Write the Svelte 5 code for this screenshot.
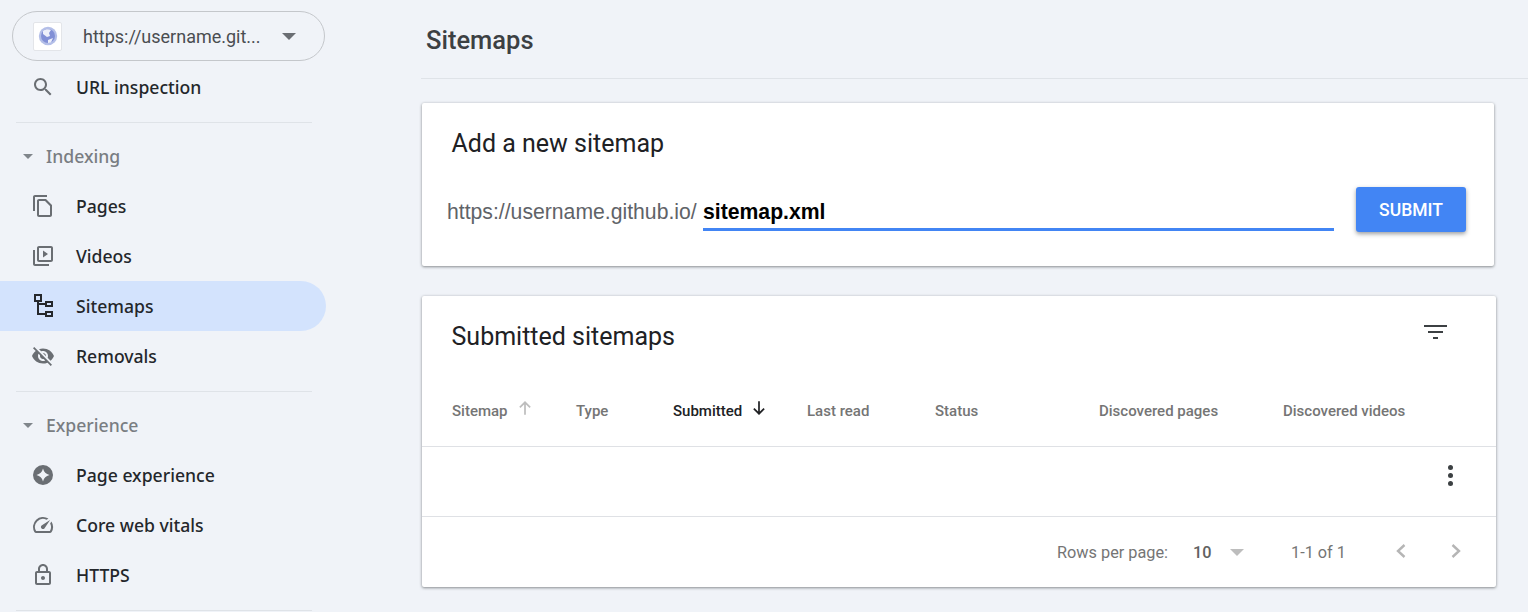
<script>
  const icons = {
    pages: 'M16 1H4c-1.1 0-2 .9-2 2v14h2V3h12V1zm-1 4H8c-1.1 0-1.99.9-1.99 2L6 21c0 1.1.89 2 1.99 2H19c1.1 0 2-.9 2-2V11l-6-6zM8 21V7h6l5 5v9H8z',
    videos: 'M4 6H2v14c0 1.1.9 2 2 2h14v-2H4V6zm16-4H8c-1.1 0-2 .9-2 2v12c0 1.1.9 2 2 2h12c1.100 0 2-.9 2-2V4c0-1.100-.9-2-2-2zm0 14H8V4h12v12zM12 6.500v7l5-3.500z',
    sitemaps: 'M3 0h8v8H3zM5 2v4h4V2zM6 8h2v1h6v2H8v8h6v2H6zM14 7h8v6h-8zM16 9v2h4V9zM14 17h8v6h-8zM16 19v2h4v-2z',
    removals: 'M12 7c2.76 0 5 2.24 5 5 0 .65-.13 1.26-.36 1.83l2.92 2.92c1.51-1.26 2.7-2.89 3.43-4.75-1.73-4.39-6-7.5-11-7.5-1.4 0-2.74.25-3.98.7l2.16 2.16C10.74 7.13 11.35 7 12 7zM2 4.27l2.28 2.28.46.46C3.08 8.3 1.78 10.02 1 12c1.73 4.39 6 7.5 11 7.5 1.55 0 3.03-.3 4.38-.84l.42.42L19.73 22 21 20.73 3.27 3 2 4.27zM7.53 9.8l1.55 1.55c-.05.21-.08.43-.08.65 0 1.66 1.34 3 3 3 .22 0 .44-.03.65-.08l1.55 1.55c-.67.33-1.41.53-2.2.53-2.76 0-5-2.24-5-5 0-.79.2-1.53.53-2.2zm4.31-.78l3.15 3.15.02-.16c0-1.66-1.34-3-3-3l-.17.01z',
    experience: 'M12 2a10 10 0 1 0 0 20 10 10 0 0 0 0-20zM12 5.500c1 3.600 2.900 5.500 6.500 6.500-3.600 1-5.500 2.900-6.500 6.500-1-3.600-2.900-5.500-6.500-6.500 3.600-1 5.500-2.900 6.500-6.500z',
    vitals: 'M20.38 8.57l-1.23 1.85a8 8 0 0 1-.22 7.58H5.07A8 8 0 0 1 15.58 6.85l1.85-1.23A10 10 0 0 0 3.35 19a2 2 0 0 0 1.72 1h13.85a2 2 0 0 0 1.74-1 10 10 0 0 0-.27-10.44zm-9.79 6.84a2 2 0 0 0 2.83 0l5.66-8.49-8.49 5.66a2 2 0 0 0 0 2.83z',
    https: 'M18 8h-1V6c0-2.76-2.24-5-5-5S7 3.24 7 6v2H6c-1.1 0-2 .9-2 2v10c0 1.1.9 2 2 2h12c1.1 0 2-.9 2-2V10c0-1.1-.9-2-2-2zM9 6c0-1.66 1.34-3 3-3s3 1.34 3 3v2H9V6zm9 14H6V10h12v10zm-6-3c1.1 0 2-.9 2-2s-.9-2-2-2-2 .9-2 2 .9 2 2 2z'
  };
  const indexing = [
    { label: 'Pages', icon: 'pages' },
    { label: 'Videos', icon: 'videos' },
    { label: 'Sitemaps', icon: 'sitemaps', active: true },
    { label: 'Removals', icon: 'removals' }
  ];
  const experience = [
    { label: 'Page experience', icon: 'experience' },
    { label: 'Core web vitals', icon: 'vitals' },
    { label: 'HTTPS', icon: 'https' }
  ];
  const columns = ['Type', 'Last read', 'Status', 'Discovered pages', 'Discovered videos'];
</script>

{#snippet navItem(item)}
  <div class="nav-item" class:active={item.active}>
    <svg class="nav-icon" viewBox="0 0 24 24" fill-rule="evenodd"><path d={icons[item.icon]} /></svg>
    <span class="nav-label">{item.label}</span>
  </div>
{/snippet}

{#snippet section(title, items)}
  <div class="section-head">
    <span class="caret small"></span>
    <span class="nav-label">{title}</span>
  </div>
  {#each items as item}
    {@render navItem(item)}
  {/each}
  <div class="rule"></div>
{/snippet}

<div class="page">
  <aside class="sidebar">
    <div class="property">
      <div class="favicon">
        <svg viewBox="0 0 20 20" width="20" height="20">
          <circle cx="10" cy="10" r="9.200" fill="#b4bfe8" />
          <circle cx="10" cy="10" r="7" fill="#8290d6" />
          <path d="M5 5c2-2 6-2.500 8-1l-2 3 1 3-3 1-4-3zM10 14l5-2-2 4.500-3 .5z" fill="#eef0fa" />
        </svg>
      </div>
      <span class="property-url">https://username.git...</span>
      <span class="caret"></span>
    </div>
    <div class="nav-item first">
      <svg class="nav-icon" viewBox="0 0 24 24"><path d="M15.500 14h-.79l-.28-.27C15.410 12.590 16 11.110 16 9.500 16 5.910 13.090 3 9.500 3S3 5.910 3 9.500 5.910 16 9.500 16c1.610 0 3.090-.59 4.230-1.570l.27.28v.79l5 4.990L20.490 19l-4.990-5zm-6 0C7.010 14 5 11.990 5 9.500S7.010 5 9.500 5 14 7.010 14 9.500 11.990 14 9.500 14z" /></svg>
      <span class="nav-label">URL inspection</span>
    </div>
    <div class="rule"></div>
    {@render section('Indexing', indexing)}
    {@render section('Experience', experience)}
  </aside>

  <main class="main">
    <header class="topbar"><h1>Sitemaps</h1></header>

    <section class="card add-card">
      <h2>Add a new sitemap</h2>
      <div class="add-row">
        <span class="prefix">https://username.github.io/</span>
        <div class="input">sitemap.xml</div>
        <button class="submit">SUBMIT</button>
      </div>
    </section>

    <section class="card list-card">
      <div class="list-head">
        <h2>Submitted sitemaps</h2>
        <svg class="filter" viewBox="0 0 23 14" width="23" height="14"><path d="M0 0h23v2H0zM4 6h15v2H4zM9 12h5v2H9z" /></svg>
      </div>
      <div class="table-head">
        <div class="th">Sitemap
          <svg class="arrow faint" viewBox="0 0 14 14" width="16" height="16"><path d="M7 13V2M2.500 6.500 7 2l4.500 4.500" /></svg>
        </div>
        <div class="th">{columns[0]}</div>
        <div class="th sorted">Submitted
          <svg class="arrow" viewBox="0 0 14 14" width="16" height="16"><path d="M7 1v11M2.500 7.500 7 12l4.500-4.500" /></svg>
        </div>
        {#each columns.slice(1) as col}
          <div class="th">{col}</div>
        {/each}
      </div>
      <div class="table-row">
        <div class="dots"><i></i><i></i><i></i></div>
      </div>
      <div class="table-foot">
        <span class="rows-label">Rows per page:</span>
        <span class="rows-value">10</span>
        <span class="caret foot-caret"></span>
        <span class="range">1-1 of 1</span>
        <svg class="chev" viewBox="0 0 12 16" width="12" height="16"><path d="M9.500 2 3 8l6.500 6" /></svg>
        <svg class="chev next" viewBox="0 0 12 16" width="12" height="16"><path d="M2.500 2 9 8l-6.500 6" /></svg>
      </div>
    </section>
  </main>
</div>

<style>
  :global(body) {
    margin: 0;
    background: #f0f3f8;
  }
  .page {
    width: 1528px;
    height: 612px;
    overflow: hidden;
    display: flex;
    background: #f0f3f8;
    font-family: Roboto, "Liberation Sans", sans-serif;
  }

  /* Sidebar */
  .sidebar {
    flex: 0 0 421px;
    box-sizing: border-box;
    padding-top: 11px;
    font-family: "Noto Sans", Roboto, sans-serif;
  }
  .property {
    box-sizing: border-box;
    width: 313px;
    height: 50px;
    margin-left: 12px;
    padding-left: 20px;
    display: flex;
    align-items: center;
    border: 1px solid #c4c7cb;
    border-radius: 25px;
  }
  .favicon {
    width: 29px;
    height: 29px;
    flex: none;
    display: flex;
    align-items: center;
    justify-content: center;
    background: #fff;
    border: 1px solid #e3e5e9;
    box-sizing: border-box;
    border-radius: 2px;
  }
  .property-url {
    margin-left: 21px;
    width: 199px;
    flex: none;
    font: 18px Roboto, sans-serif;
    color: #4a4d51;
    white-space: nowrap;
  }
  .caret {
    width: 0;
    height: 0;
    border-left: 7px solid transparent;
    border-right: 7px solid transparent;
    border-top: 7px solid #6a6e73;
  }
  .caret.small {
    border-left-width: 5px;
    border-right-width: 5px;
    border-top-width: 5px;
    border-top-color: #80868b;
  }
  .nav-item {
    height: 50px;
    width: 326px;
    display: flex;
    align-items: center;
    padding-left: 31px;
    box-sizing: border-box;
    font-size: 17.600px;
    font-weight: 500;
    color: #24272b;
    border-radius: 0 25px 25px 0;
  }
  .nav-item.first {
    height: 50px;
    margin-top: 1px;
  }
  .nav-item.active {
    background: #d3e3fd;
  }
  .nav-item.active .nav-icon {
    fill: #25282c;
  }
  .nav-label {
    margin-top: -1px;
  }
  .nav-icon {
    width: 24px;
    height: 24px;
    flex: none;
    fill: #6a6e73;
    margin-right: 21px;
  }
  .rule {
    height: 1px;
    width: 296px;
    margin-left: 16px;
    background: #dfe3e8;
    margin-top: 10px;
    margin-bottom: 8px;
  }
  .section-head {
    height: 50px;
    display: flex;
    align-items: center;
    box-sizing: border-box;
    padding-left: 23px;
    gap: 13px;
    font-size: 17.600px;
    font-weight: 500;
    color: #797d82;
  }

  /* Main */
  .main {
    flex: 1;
    min-width: 0;
  }
  .topbar {
    height: 78px;
    box-sizing: content-box;
    border-bottom: 1px solid #dfe3e8;
    display: flex;
    align-items: center;
    padding-left: 5px;
  }
  h1 {
    margin: 0 0 -2px;
    font-size: 25.500px;
    font-weight: 500;
    color: #3c4043;
  }
  h2 {
    margin: 0;
    font-size: 25px;
    font-weight: 400;
    color: #202124;
  }
  .card {
    background: #fff;
    border-radius: 2px;
    box-shadow: 0 1px 3px rgba(60, 64, 67, 0.55), 0 0 3px rgba(60, 64, 67, 0.1);
    margin-left: 1px;
  }
  .add-card {
    width: 1072px;
    height: 163px;
    margin-top: 24px;
    box-sizing: border-box;
    padding: 27px 28px 0 25px;
  }
  .add-card h2 {
    margin-left: 4.500px;
    line-height: 28px;
  }
  .add-row {
    display: flex;
    align-items: flex-end;
    margin-top: 29px;
  }
  .prefix {
    font: 21.200px/30px "Liberation Sans", Arial, sans-serif;
    color: #5f6368;
    margin-bottom: 5px;
    white-space: nowrap;
    width: 256px;
    flex: none;
  }
  .input {
    width: 631px;
    flex: none;
    margin-bottom: 1px;
    box-sizing: border-box;
    height: 43px;
    border-bottom: 3px solid #4285f4;
    font: bold 21.200px/47px "Liberation Sans", Arial, sans-serif;
    color: #000;
  }
  .submit {
    margin-left: 22px;
    width: 110px;
    height: 45px;
    flex: none;
    border: 0;
    border-radius: 3px;
    background: #4285f4;
    color: #fff;
    font: 500 17.500px Roboto, sans-serif;
    box-shadow: 0 2px 4px rgba(60, 64, 67, 0.5);
    padding: 0;
  }
  .list-card {
    width: 1074px;
    height: 291px;
    margin-top: 30px;
    display: flex;
    flex-direction: column;
  }
  .list-head {
    height: 73px;
    flex: none;
    display: flex;
    justify-content: space-between;
    padding: 0 49px 0 29.500px;
    align-items: flex-start;
  }
  .list-head h2 {
    margin-top: 27px;
    line-height: 28px;
  }
  .filter {
    margin-top: 29px;
    fill: #3c4043;
  }
  .table-head {
    height: 78px;
    flex: none;
    box-sizing: border-box;
    display: grid;
    grid-template-columns: 124px 97px 134px 128px 164px 184px 1fr;
    padding: 0 0 0 30px;
    align-items: center;
    border-bottom: 1px solid #dfe1e5;
  }
  .th {
    font-size: 15px;
    font-weight: 500;
    color: #757575;
    display: flex;
    align-items: center;
    gap: 9px;
    padding-top: 6px;
  }
  .th.sorted {
    color: #202124;
  }
  .arrow {
    fill: none;
    stroke: #202124;
    stroke-width: 1.500;
    margin-top: -6px;
  }
  .arrow.faint {
    stroke: #bdbdbd;
  }
  .table-row {
    height: 70px;
    flex: none;
    box-sizing: border-box;
    border-bottom: 1px solid #dfe1e5;
    display: flex;
    justify-content: flex-end;
    padding: 18px 43px 0 0;
  }
  .dots {
    display: flex;
    flex-direction: column;
    gap: 3px;
  }
  .dots i {
    display: block;
    width: 5px;
    height: 5px;
    border-radius: 50%;
    background: #3c4043;
  }
  .table-foot {
    flex: 1;
    display: flex;
    align-items: center;
    padding-left: 635px;
    font-size: 16.300px;
    color: #757575;
  }
  .rows-label {
    width: 136px;
    flex: none;
  }
  .rows-value {
    width: 37px;
    flex: none;
    font-weight: 500;
    color: #616161;
  }
  .foot-caret {
    border-top-color: #bdbdbd;
    flex: none;
  }
  .range {
    margin-left: 47px;
    width: 103px;
    flex: none;
  }
  .chev {
    fill: none;
    stroke: #b5b5b5;
    stroke-width: 2.400;
    margin-top: -3px;
    flex: none;
    position: relative;
    left: 0.500px;
  }
  .chev.next {
    margin-left: 43px;
  }
</style>
